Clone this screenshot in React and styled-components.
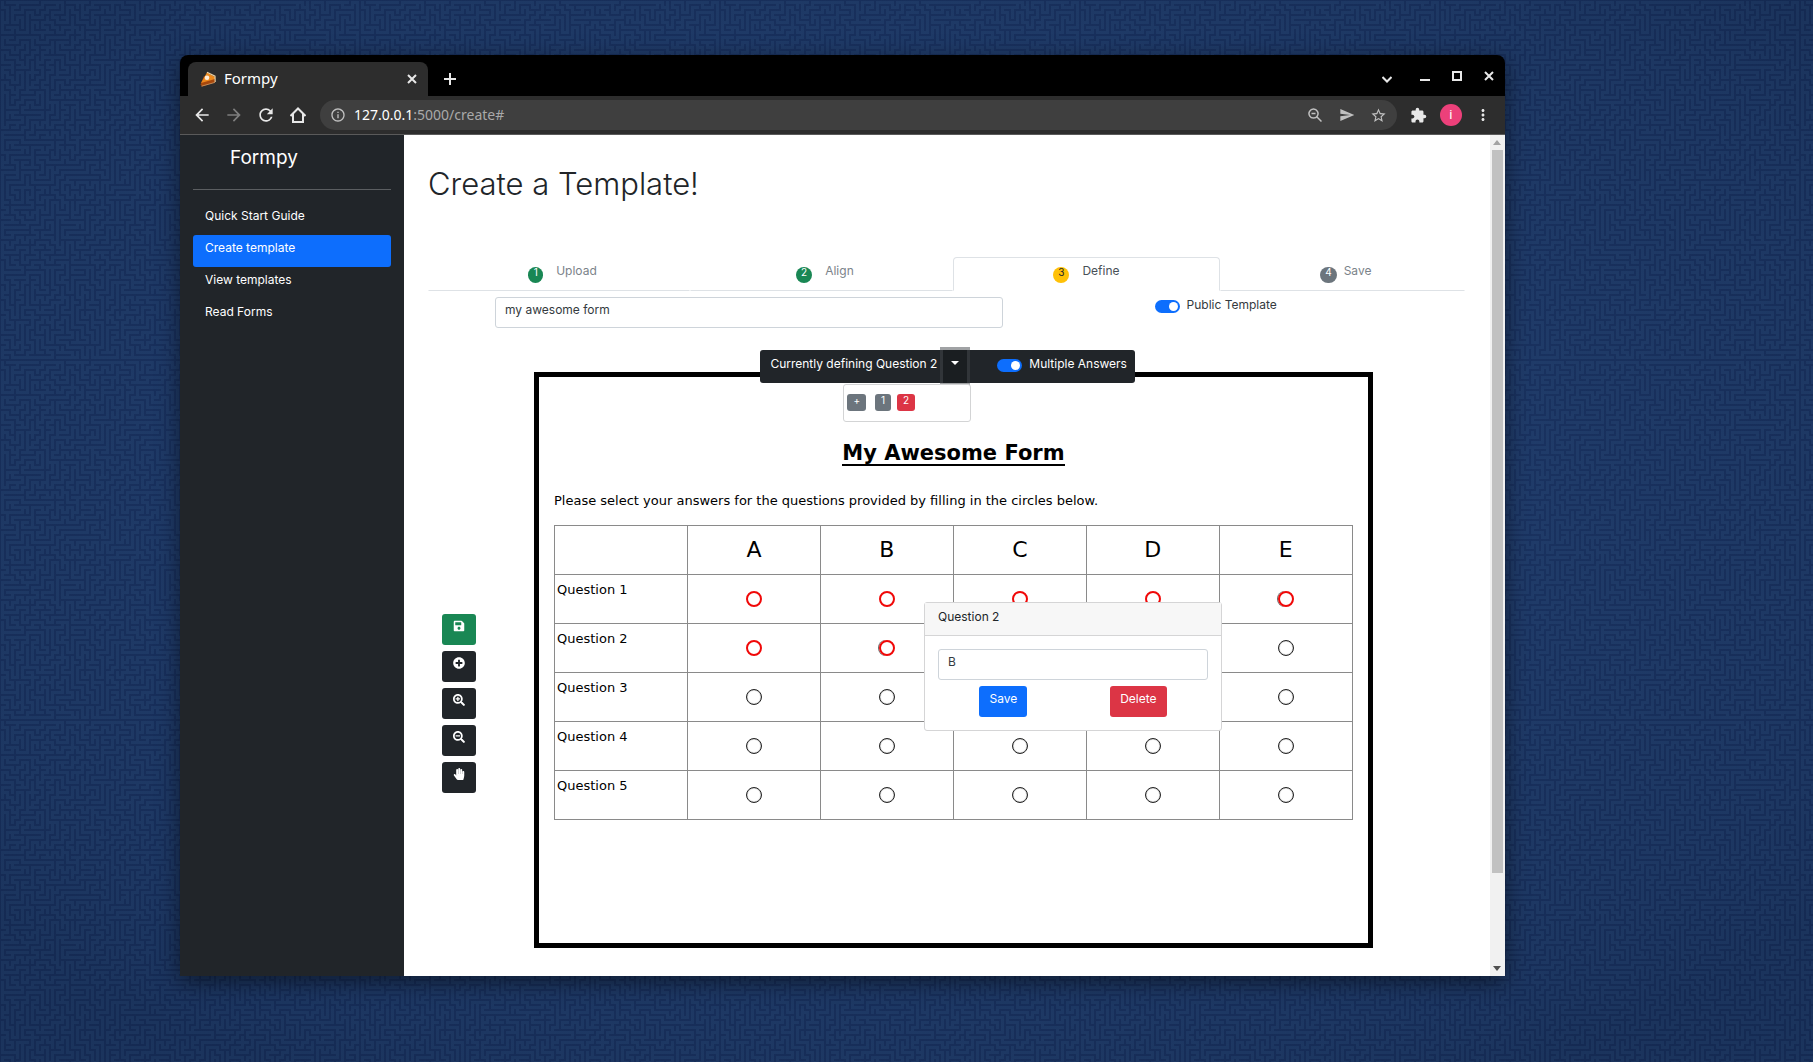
import React, { useState } from "react";
import styled, { createGlobalStyle, css } from "styled-components";
import { FaHandPaper, FaSave, FaPlusCircle, FaSearchPlus, FaSearchMinus } from "react-icons/fa";
import {
  MdArrowBack,
  MdArrowForward,
  MdRefresh,
  MdInfoOutline,
  MdSend,
  MdStarBorder,
  MdExtension,
  MdMoreVert,
} from "react-icons/md";

const ui = `Inter, "Liberation Sans", sans-serif`;
const chromeFont = `"Noto Sans", "Open Sans", sans-serif`;
const paper = `"DejaVu Sans", sans-serif`;

const Global = createGlobalStyle`
  *, *::before, *::after { box-sizing: border-box; }
  body { margin: 0; background: #18315f; }
  button, input { font: inherit; margin: 0; }
  h1, h2, p { margin: 0; }
`;

/* ---------- desktop ---------- */

const Desktop = styled.div`
  position: relative;
  min-height: 100vh;
  padding: 55px 17% 86px 180px;
  overflow: hidden;
  font: 12px/17px ${ui};
`;

const WallpaperSvg = styled.svg`
  position: absolute;
  inset: 0;
  width: 100%;
  height: 100%;
`;

/* Random spanning tree over a grid, drawn as short corridors. */
function mazePath(n, cell) {
  let seed = 7;
  const rand = (k) => {
    seed = (seed * 1103515245 + 12345) % 2147483648;
    return Math.floor((seed / 2147483648) * k);
  };
  const seen = new Set([0]);
  const stack = [[0, 0]];
  const half = cell / 2;
  let d = "";
  while (stack.length) {
    const [x, y] = stack[stack.length - 1];
    const open = [
      [1, 0],
      [-1, 0],
      [0, 1],
      [0, -1],
    ].filter(([dx, dy]) => {
      const nx = x + dx;
      const ny = y + dy;
      return nx >= 0 && ny >= 0 && nx < n && ny < n && !seen.has(ny * n + nx);
    });
    if (!open.length) {
      stack.pop();
      continue;
    }
    const [dx, dy] = open[rand(open.length)];
    seen.add((y + dy) * n + x + dx);
    d += `M${x * cell + half} ${y * cell + half}l${dx * cell} ${dy * cell}`;
    stack.push([x + dx, y + dy]);
  }
  return d;
}

const TILE = 360;
const maze = mazePath(TILE / 5, 5);

const Wallpaper = () => (
  <WallpaperSvg aria-hidden="true">
    <defs>
      <pattern id="maze" width={TILE} height={TILE} patternUnits="userSpaceOnUse">
        <rect width={TILE} height={TILE} fill="#162c56" />
        <path d={maze} stroke="#1d3761" strokeWidth="3" strokeLinecap="square" fill="none" />
      </pattern>
      <radialGradient id="glow" cx="50%" cy="45%" r="65%">
        <stop offset="0" stopColor="#3c68b4" stopOpacity="0.28" />
        <stop offset="0.75" stopColor="#2c5298" stopOpacity="0.06" />
        <stop offset="1" stopColor="#0c1d3e" stopOpacity="0.12" />
      </radialGradient>
    </defs>
    <rect width="100%" height="100%" fill="url(#maze)" />
    <rect width="100%" height="100%" fill="url(#glow)" />
  </WallpaperSvg>
);

/* ---------- browser window ---------- */

const Window = styled.div`
  position: relative;
  border-radius: 8px 8px 0 0;
  box-shadow: 0 6px 22px rgba(0, 0, 0, 0.5);
  overflow: hidden;
`;

const TitleBar = styled.div`
  display: flex;
  align-items: flex-end;
  height: 41px;
  padding-left: 8px;
  background: #000;
  color: #fff;
  font-family: ${chromeFont};
`;

const BrowserTab = styled.div`
  display: flex;
  align-items: center;
  gap: 8px;
  width: 240px;
  height: 34px;
  padding: 0 8px 1px 12px;
  border-radius: 8px 8px 0 0;
  background: #2d2d2d;
  font-size: 15px;
`;

const TabTitle = styled.span`
  flex: 1;
`;

const IconButton = styled.button`
  display: flex;
  align-items: center;
  justify-content: center;
  width: ${(p) => p.$size || 32}px;
  height: ${(p) => p.$size || 32}px;
  padding: 0;
  border: 0;
  background: none;
  color: ${(p) => p.$color || "#e8e8e8"};
  flex: none;
`;

const NewTab = styled(IconButton)`
  margin: 0 auto 1px 6px;
`;

const WindowButtons = styled.div`
  display: flex;
  align-items: center;
  height: 41px;
`;

const TabSearch = styled(IconButton)`
  padding-top: 6px;
`;

const Toolbar = styled.div`
  display: flex;
  align-items: center;
  height: 39px;
  padding: 0 6px;
  border-bottom: 1px solid #5a5a5a;
  background: #2d2d2d;
`;

const AddressBar = styled.div`
  display: flex;
  align-items: center;
  flex: 1;
  height: 30px;
  margin: 0 6px;
  padding: 0 2px 0 10px;
  border-radius: 15px;
  background: #3f3f3f;
  color: #c0c0c0;
`;

const UrlText = styled.span`
  flex: 1;
  margin-left: 8px;
  font: 14px/20px ${chromeFont};
  color: #a9a9a9;

  b {
    font-weight: 400;
    color: #fff;
  }
`;

const Avatar = styled.button`
  width: 22px;
  height: 22px;
  margin: 0 5px;
  padding: 0;
  border: 0;
  border-radius: 50%;
  background: #ec407a;
  color: #fff;
  font: 13px/22px Roboto, sans-serif;
`;

/* ---------- page ---------- */

const Page = styled.div`
  display: flex;
  align-items: stretch;
  background: #fff;
`;

const Sidebar = styled.nav`
  width: 224px;
  flex: none;
  padding: 13px;
  background: #212529;
  color: #fff;
`;

const Brand = styled.a`
  display: block;
  padding-left: 37px;
  font-size: 19px;
  line-height: 20px;
  color: #fff;
  text-decoration: none;
`;

const Rule = styled.hr`
  height: 1px;
  margin: 21px 0 13px;
  border: 0;
  background: #5b5e61;
`;

const NavLink = styled.a`
  display: block;
  height: 32px;
  padding: 4px 12px;
  border-radius: 3px;
  background: ${(p) => (p.$active ? "#0d6efd" : "transparent")};
  color: #fff;
  text-decoration: none;
`;

const Main = styled.main`
  flex: 1;
  min-width: 0;
  padding: 30px 25px 28px 24px;
`;

const Heading = styled.h1`
  font-size: 31px;
  line-height: 38px;
  font-weight: 300;
  color: #212529;
`;

const Steps = styled.ol`
  display: grid;
  grid-template-columns: 262fr 263fr 267fr 245fr;
  margin: 54px 0 0;
  padding: 0;
  list-style: none;
`;

const Step = styled.li`
  border: 1px solid transparent;
  border-bottom-color: #dee2e6;
  ${(p) =>
    p.$active &&
    css`
      border-color: #dee2e6 #dee2e6 #fff;
      border-radius: 4px 4px 0 0;
    `}
`;

const StepLink = styled.a`
  display: flex;
  justify-content: center;
  gap: ${(p) => p.$gap}px;
  height: 32px;
  padding: 4px 0 0 ${(p) => (p.$active ? 0 : 7)}px;
  color: ${(p) => (p.$active ? "#495057" : "#7b838a")};
  text-decoration: none;
`;

const fills = {
  green: ["#198754", "#fff"],
  yellow: ["#ffc107", "#212529"],
  gray: ["#6c757d", "#fff"],
  red: ["#dc3545", "#fff"],
};

const StepBadge = styled.span`
  min-width: 15px;
  height: 16px;
  margin-top: 5px;
  padding: 0 5px;
  border-radius: 8px;
  background: ${(p) => fills[p.$fill][0]};
  color: ${(p) => fills[p.$fill][1]};
  font-size: 10px;
  line-height: 10px;
  text-align: center;
`;

const MetaRow = styled.div`
  display: flex;
  align-items: flex-start;
  padding: 6px 0 0 67px;
`;

const TextInput = styled.input`
  width: 100%;
  max-width: ${(p) => p.$max || "none"};
  height: 31px;
  padding: 3px 9px 9px;
  border: 1px solid #ced4da;
  border-radius: 3px;
  background: #fff;
  color: #343a40;
  line-height: 17px;
  outline: 0;
`;

const SwitchLabel = styled.label`
  display: flex;
  align-items: flex-start;
  gap: 7px;
  flex: none;
  color: ${(p) => p.$color || "#343a40"};
`;

const PublicSwitch = styled(SwitchLabel)`
  margin: -1px 0 0 auto;
  padding-right: 188px;
`;

const Switch = styled.input.attrs({ type: "checkbox", role: "switch" })`
  appearance: none;
  position: relative;
  width: 25px;
  height: 13px;
  margin-top: 4px;
  border-radius: 7px;
  background: ${(p) => (p.checked ? "#0d6efd" : "#adb5bd")};

  &::before {
    content: "";
    position: absolute;
    top: 2px;
    ${(p) => (p.checked ? "right" : "left")}: 2px;
    width: 9px;
    height: 9px;
    border-radius: 50%;
    background: #fff;
  }
`;

const Workspace = styled.div`
  display: flex;
  margin-top: 44px;
  padding-right: 92px;
`;

const Tools = styled.div`
  display: flex;
  flex-direction: column;
  gap: 6px;
  width: 106px;
  flex: none;
  padding: 242px 0 0 14px;
`;

const Button = styled.button`
  height: 31px;
  padding: 0 10px 6px;
  border: 0;
  border-radius: 3px;
  background: ${(p) => p.$bg || "#212529"};
  color: #fff;
`;

const ToolButton = styled(Button)`
  display: flex;
  justify-content: center;
  width: 34px;
  padding: 6px 1px 0 0;
`;

/* ---------- scanned form ---------- */

const Sheet = styled.section`
  position: relative;
  flex: 1;
  min-width: 0;
  height: 576px;
  padding: 65px 15px 0;
  border: 5px solid #000;
  background: #fff;
  font: 13px/20px ${paper};
  color: #000;
`;

const SheetTitle = styled.h2`
  display: table;
  margin: 0 auto;
  border-bottom: 2px solid #000;
  font-size: 21px;
  line-height: 22px;
`;

const Intro = styled.p`
  margin: 25px 0 14px;
`;

const Grid = styled.table`
  width: 100%;
  border-collapse: collapse;
  table-layout: fixed;
`;

const cell = css`
  height: 49px;
  padding: 0;
  border: 1px solid #8a8a8a;
`;

const ColumnHead = styled.th`
  ${cell}
  font-size: 22px;
  font-weight: 400;
`;

const RowHead = styled.th`
  ${cell}
  padding: 5px 0 0 2px;
  font-weight: 400;
  text-align: left;
  vertical-align: top;
`;

const Cell = styled.td`
  ${cell}
`;

const Bubble = styled.span`
  display: block;
  width: 16px;
  height: 16px;
  margin: 0 auto;
  border: ${(p) => (p.$marked ? "2px solid #f00808" : "1px solid #222")};
  border-radius: 50%;
  box-shadow: ${(p) => (p.$marked ? (p.$offset ? "-1px 0 0 rgba(0, 0, 0, 0.6)" : "none") : "inset 0 0 1px #222")};
`;

/* ---------- floating controls ---------- */

const DefineBar = styled.div`
  position: absolute;
  top: -27px;
  left: calc(50% - 193px);
  display: flex;
  align-items: flex-start;
  height: 33px;
  padding: 0 8px 0 10px;
  border-radius: 3px;
  background: #212529;
  color: #fff;
  font: 12px/17px ${ui};
  white-space: nowrap;
`;

const DefineText = styled.span`
  padding: 5px 6px 0 0;
`;

const Caret = styled.button`
  width: 24px;
  height: 33px;
  margin-right: 30px;
  padding: 0 0 7px;
  border: 0;
  background: #1a1e21;
  color: #fff;
  box-shadow: 0 0 0 3px rgba(66, 70, 73, 0.5);

  &::after {
    content: "";
    display: inline-block;
    border: 4px solid transparent;
    border-top-color: #fff;
    border-bottom: 0;
    vertical-align: 3px;
  }
`;

const BarSwitch = styled(SwitchLabel)`
  padding-top: 5px;
`;

const QuestionMenu = styled.div`
  position: absolute;
  top: 100%;
  left: 83px;
  display: flex;
  align-items: flex-start;
  width: 128px;
  height: 38px;
  margin-top: 1px;
  padding: 9px 3px;
  border: 1px solid #d3d4d5;
  border-radius: 3px;
  background: #fff;
`;

const QuestionChip = styled.button`
  min-width: 16px;
  height: 17px;
  margin-right: ${(p) => p.$gap || 0}px;
  padding: 0 6px 5px;
  border: 0;
  border-radius: 3px;
  background: ${(p) => fills[p.$fill][0]};
  color: #fff;
  font-size: 10px;
  line-height: 12px;
`;

const Popover = styled.div`
  position: absolute;
  top: 225px;
  left: 385px;
  width: 298px;
  border: 1px solid #d5d5d6;
  border-radius: 3px;
  background: #fff;
  color: #212529;
  font: 12px/17px ${ui};
`;

const PopoverHead = styled.div`
  height: 33px;
  padding: 5px 13px;
  border-bottom: 1px solid #d5d5d6;
  background: #f7f7f7;
`;

const PopoverBody = styled.form`
  padding: 13px;
`;

const PopoverActions = styled.div`
  display: flex;
  justify-content: space-around;
  margin-top: 6px;
`;

/* ---------- scrollbar ---------- */

const Scrollbar = styled.div`
  display: flex;
  flex-direction: column;
  align-items: center;
  width: 15px;
  flex: none;
  padding: 5px 0;
  background: #f1f1f1;
`;

const Arrow = styled.span`
  width: 0;
  height: 5px;
  flex: none;
  border: 4px solid transparent;
  border-width: ${(p) => (p.$up ? "0 4px 5px" : "5px 4px 0")};
  border-color: ${(p) => (p.$up ? "transparent transparent #a3a3a3" : "#505050 transparent transparent")};
`;

const Thumb = styled.span`
  width: 11px;
  margin: 5px 0 auto;
  flex: 0 0 87%;
  background: #c1c1c1;
`;

/* ---------- drawings ---------- */

const Pie = () => (
  <svg width="16" height="16" viewBox="0 0 16 16" aria-hidden="true">
    <path d="M0.5 13.5 L4 5 L15 8.5 L15 11.5 L2 15.5 Z" fill="#a8480c" />
    <path d="M1 12 L7 1.5 L15 6 L15 8 Z" fill="#ee8a1d" />
    <path d="M7 1.2 L15 5.2 L15.2 11" fill="none" stroke="#e8cfa4" strokeWidth="1.2" />
    <path d="M1.5 15.2 L15 11.4" stroke="#cf9a66" strokeWidth="0.8" />
    <circle cx="7" cy="6.8" r="2.3" fill="#ffeeda" />
  </svg>
);

const Stroke = ({ d, size = 12, width = 2 }) => (
  <svg
    width={size}
    height={size}
    viewBox={`0 0 ${size} ${size}`}
    fill="none"
    stroke="currentColor"
    strokeWidth={width}
    aria-hidden="true"
  >
    <path d={d} />
  </svg>
);

const Cross = () => <Stroke size={10} d="M1 1l8 8M9 1l-8 8" />;
const Plus = () => <Stroke d="M6 0v12M0 6h12" />;
const Chevron = () => <Stroke size={10} d="M0.5 3l4.5 4.5l4.5 -4.5" />;
const Minimize = () => <Stroke size={10} d="M0 9h10" />;
const Maximize = () => <Stroke size={10} d="M1 1h8v8h-8z" />;
const House = () => <Stroke size={16} width={2} d="M0.5 9l7.5 -7.5l7.5 7.5M3 7v8h10v-8" />;
const ZoomLens = () => (
  <Stroke size={14} width={1.5} d="M5.5 1a4.5 4.5 0 1 0 0.01 0zM3.5 5.5h4M9 9l4.5 4.5" />
);

/* ---------- data ---------- */

const links = ["Quick Start Guide", "Create template", "View templates", "Read Forms"];
const steps = [
  { n: 1, label: "Upload", fill: "green", gap: 13 },
  { n: 2, label: "Align", fill: "green", gap: 13 },
  { n: 3, label: "Define", fill: "yellow", gap: 13, active: true },
  { n: 4, label: "Save", fill: "gray", gap: 7 },
];
const columns = ["A", "B", "C", "D", "E"];
const marked = { 1: "ABCDE", 2: "AB" };
const tools = [
  { label: "Save template", Icon: FaSave, bg: "#198754" },
  { label: "Add", Icon: FaPlusCircle },
  { label: "Zoom in", Icon: FaSearchPlus },
  { label: "Zoom out", Icon: FaSearchMinus },
  { label: "Pan", Icon: FaHandPaper },
];

export default function App() {
  const [isPublic, setPublic] = useState(true);
  const [multiple, setMultiple] = useState(true);

  return (
    <>
      <Global />
      <Desktop>
        <Wallpaper />
        <Window>
          <TitleBar>
            <BrowserTab>
              <Pie />
              <TabTitle>Formpy</TabTitle>
              <IconButton $size={16} aria-label="Close tab"><Cross /></IconButton>
            </BrowserTab>
            <NewTab aria-label="New tab"><Plus /></NewTab>
            <WindowButtons>
              <TabSearch $size={44} aria-label="Search tabs"><Chevron /></TabSearch>
              <IconButton aria-label="Minimize"><Minimize /></IconButton>
              <IconButton aria-label="Maximize"><Maximize /></IconButton>
              <IconButton aria-label="Close"><Cross /></IconButton>
            </WindowButtons>
          </TitleBar>
          <Toolbar>
            <IconButton aria-label="Back"><MdArrowBack size={20} /></IconButton>
            <IconButton aria-label="Forward" $color="#7d7d7d"><MdArrowForward size={20} /></IconButton>
            <IconButton aria-label="Reload"><MdRefresh size={20} /></IconButton>
            <IconButton aria-label="Home"><House /></IconButton>
            <AddressBar>
              <MdInfoOutline size={16} />
              <UrlText><b>127.0.0.1</b>:5000/create#</UrlText>
              <IconButton $color="#c0c0c0" aria-label="Zoom level"><ZoomLens /></IconButton>
              <IconButton $color="#c0c0c0" aria-label="Send"><MdSend size={16} /></IconButton>
              <IconButton $color="#c0c0c0" aria-label="Bookmark"><MdStarBorder size={17} /></IconButton>
            </AddressBar>
            <IconButton aria-label="Extensions"><MdExtension size={17} /></IconButton>
            <Avatar aria-label="Profile">i</Avatar>
            <IconButton aria-label="Menu"><MdMoreVert size={18} /></IconButton>
          </Toolbar>

          <Page>
            <Sidebar>
              <Brand href="#">Formpy</Brand>
              <Rule />
              {links.map((text) => (
                <NavLink key={text} href="#" $active={text === "Create template"}>{text}</NavLink>
              ))}
            </Sidebar>

            <Main>
              <Heading>Create a Template!</Heading>
              <Steps>
                {steps.map((s) => (
                  <Step key={s.n} $active={s.active}>
                    <StepLink href="#" $gap={s.gap} $active={s.active}>
                      <StepBadge $fill={s.fill}>{s.n}</StepBadge>
                      {s.label}
                    </StepLink>
                  </Step>
                ))}
              </Steps>

              <MetaRow>
                <TextInput $max="508px" aria-label="Template name" defaultValue="my awesome form" />
                <PublicSwitch>
                  <Switch checked={isPublic} onChange={(e) => setPublic(e.target.checked)} />
                  Public Template
                </PublicSwitch>
              </MetaRow>

              <Workspace>
                <Tools>
                  {tools.map(({ label, Icon, bg }) => (
                    <ToolButton key={label} aria-label={label} $bg={bg}><Icon size={12} /></ToolButton>
                  ))}
                </Tools>

                <Sheet>
                  <SheetTitle>My Awesome Form</SheetTitle>
                  <Intro>
                    Please select your answers for the questions provided by filling in the circles below.
                  </Intro>
                  <Grid>
                    <thead>
                      <tr>
                        <Cell />
                        {columns.map((c) => <ColumnHead key={c} scope="col">{c}</ColumnHead>)}
                      </tr>
                    </thead>
                    <tbody>
                      {[1, 2, 3, 4, 5].map((q) => (
                        <tr key={q}>
                          <RowHead scope="row">Question {q}</RowHead>
                          {columns.map((c) => (
                            <Cell key={c}>
                              <Bubble
                                $marked={(marked[q] || "").includes(c)}
                                $offset={(q === 1 && c === "E") || (q === 2 && c === "B")}
                              />
                            </Cell>
                          ))}
                        </tr>
                      ))}
                    </tbody>
                  </Grid>

                  <DefineBar>
                    <DefineText>Currently defining Question 2</DefineText>
                    <Caret aria-label="Choose question" aria-expanded="true" />
                    <BarSwitch $color="#fff">
                      <Switch checked={multiple} onChange={(e) => setMultiple(e.target.checked)} />
                      Multiple Answers
                    </BarSwitch>
                    <QuestionMenu>
                      <QuestionChip $fill="gray" $gap={9}>+</QuestionChip>
                      <QuestionChip $fill="gray" $gap={6}>1</QuestionChip>
                      <QuestionChip $fill="red">2</QuestionChip>
                    </QuestionMenu>
                  </DefineBar>

                  <Popover>
                    <PopoverHead>Question 2</PopoverHead>
                    <PopoverBody onSubmit={(e) => e.preventDefault()}>
                      <TextInput aria-label="Answer" defaultValue="B" />
                      <PopoverActions>
                        <Button type="submit" $bg="#0d6efd">Save</Button>
                        <Button type="button" $bg="#dc3545">Delete</Button>
                      </PopoverActions>
                    </PopoverBody>
                  </Popover>
                </Sheet>
              </Workspace>
            </Main>

            <Scrollbar aria-hidden="true">
              <Arrow $up />
              <Thumb />
              <Arrow />
            </Scrollbar>
          </Page>
        </Window>
      </Desktop>
    </>
  );
}
